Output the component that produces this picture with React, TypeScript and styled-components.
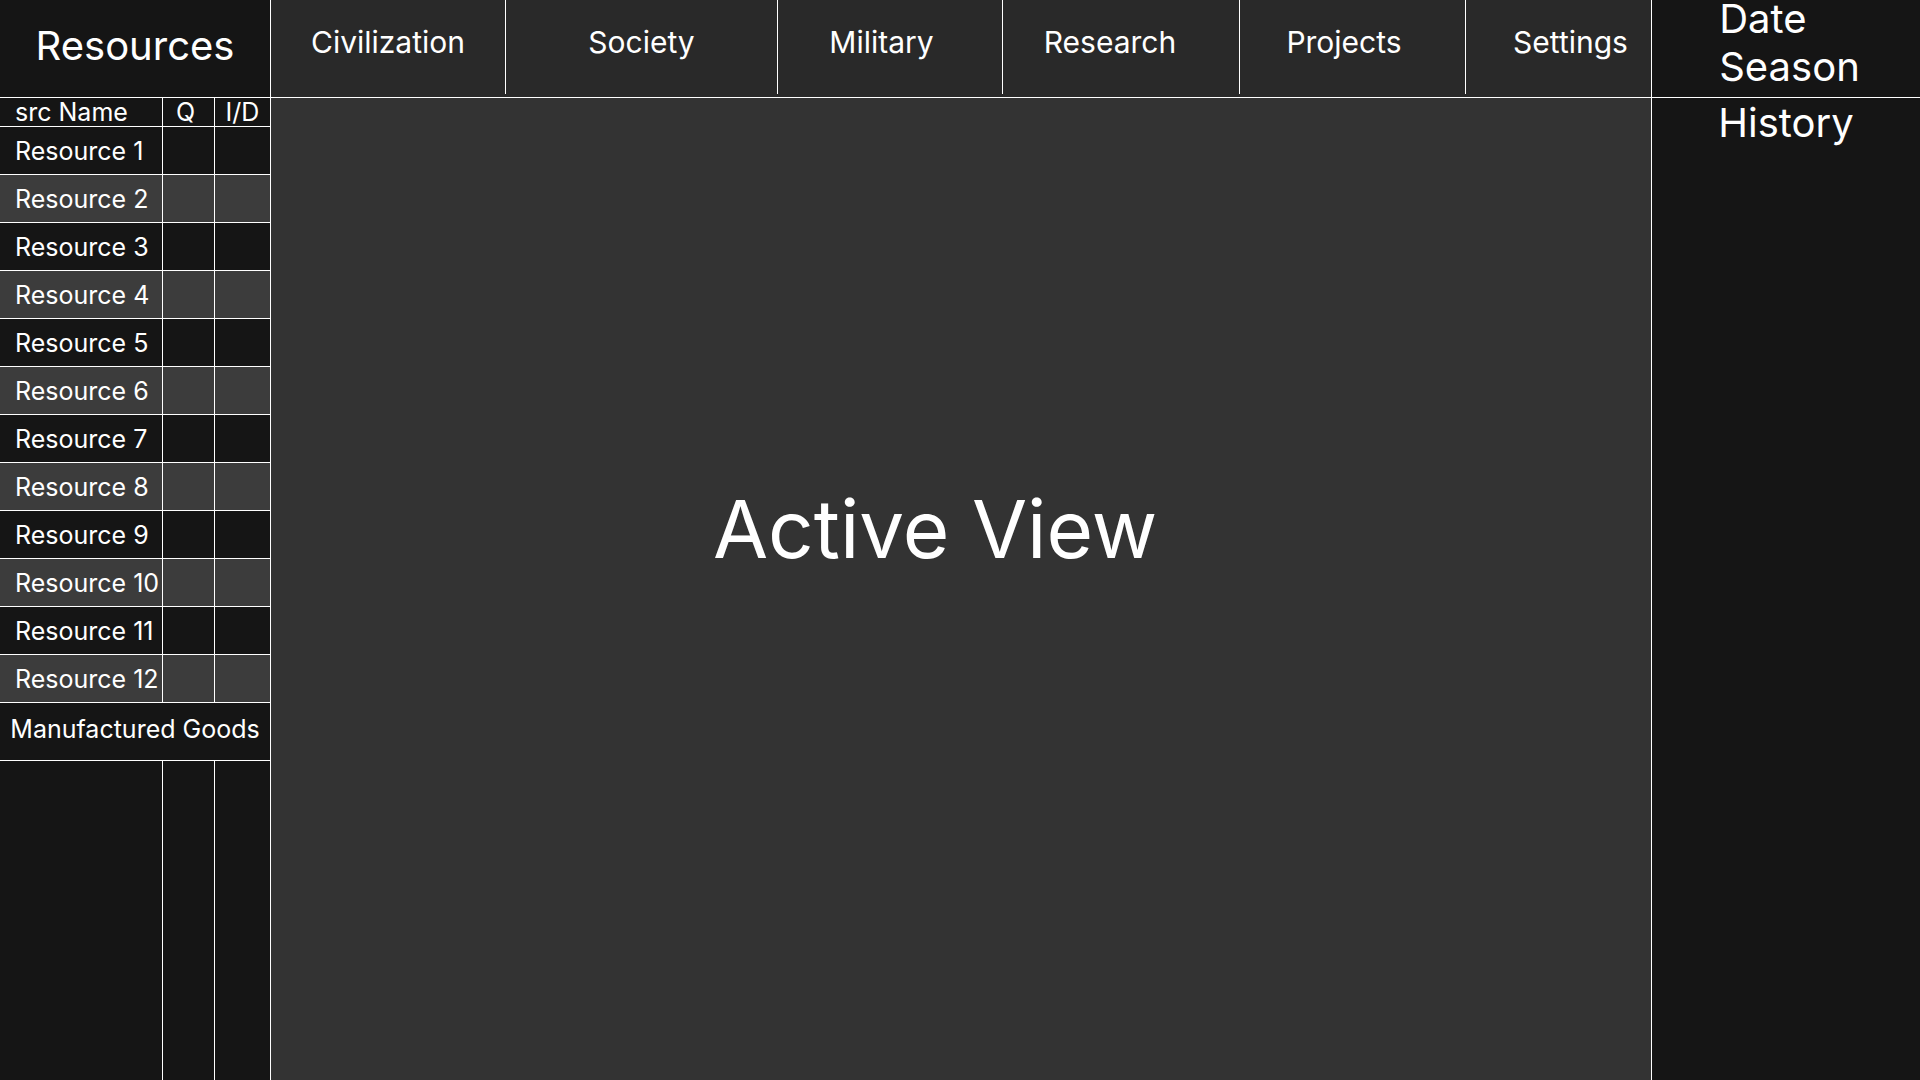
import React from "react";
import styled, { createGlobalStyle } from "styled-components";

const GlobalStyle = createGlobalStyle`
  html, body {
    margin: 0;
    padding: 0;
    background: #151515;
    overflow: hidden;
  }
  * { box-sizing: border-box; }
  body {
    font-family: Inter, "Noto Sans", sans-serif;
    color: #ffffff;
  }
`;

const Screen = styled.div`
  width: 1920px;
  height: 1080px;
  display: grid;
  grid-template-columns: 270px 1380px 268px;
  grid-template-rows: 97px 982px;
  gap: 1px;
  background: #ffffff;
  overflow: hidden;
`;

const Title = styled.div`
  background: #151515;
  display: flex;
  justify-content: center;
  align-items: flex-start;
  padding-top: 21px;
  font-size: 40px;
`;

const Nav = styled.nav`
  background: #292929;
  display: flex;
  align-items: flex-start;
`;

const Tab = styled.div<{ $w: number; $shift: number; $first?: boolean }>`
  width: ${(p) => p.$w}px;
  height: 94px;
  flex: none;
  border-left: ${(p) => (p.$first ? "none" : "1px solid #ffffff")};
  display: flex;
  justify-content: center;
  align-items: flex-start;
  padding-top: 24px;
  padding-left: ${(p) => Math.max(0, p.$shift * 2)}px;
  padding-right: ${(p) => Math.max(0, -p.$shift * 2)}px;
  font-size: 30px;
  white-space: nowrap;
`;

const Clock = styled.div`
  background: #151515;
  display: flex;
  justify-content: center;
  align-items: flex-start;
  padding-left: 7px;
`;

const ClockLines = styled.div`
  margin-top: -5px;
  font-size: 40px;
  line-height: 48px;
  text-align: left;
`;

const LeftPanel = styled.div`
  display: grid;
  grid-template-columns: 162px 51px 55px;
  grid-template-rows: 28px repeat(12, 47px) 57px 1fr;
  gap: 1px;
  background-color: #ffffff;
`;

const HeadCell = styled.div<{ $align?: "left" | "center"; $nudge?: number }>`
  background: #151515;
  display: flex;
  align-items: center;
  justify-content: ${(p) => (p.$align === "left" ? "flex-start" : "center")};
  padding-left: ${(p) => (p.$align === "left" ? "15px" : "0")};
  padding-right: ${(p) => (p.$nudge ? p.$nudge * 2 : 0)}px;
  font-size: 25px;
  white-space: nowrap;
`;

const Cell = styled.div<{ $alt: boolean; $name?: boolean }>`
  background: ${(p) => (p.$alt ? "#3c3c3c" : "#151515")};
  display: flex;
  align-items: center;
  padding-left: ${(p) => (p.$name ? "15px" : "0")};
  font-size: 25px;
  white-space: nowrap;
  overflow: visible;
`;

const GroupRow = styled.div`
  grid-column: 1 / -1;
  background: #151515;
  display: flex;
  align-items: center;
  justify-content: center;
  padding-bottom: 5px;
  font-size: 25px;
  white-space: nowrap;
`;

const EmptyCell = styled.div`
  background: #151515;
`;

const Main = styled.main`
  background: #333333;
  display: flex;
  align-items: center;
  justify-content: center;
  padding-right: 52px;
  padding-bottom: 122px;
`;

const ViewLabel = styled.div`
  font-size: 80px;
  white-space: nowrap;
`;

const History = styled.aside`
  background: #151515;
  display: flex;
  justify-content: center;
  align-items: flex-start;
  font-size: 40px;
`;

const tabs: { label: string; w: number; shift: number }[] = [
  { label: "Civilization", w: 234, shift: 0 },
  { label: "Society", w: 272, shift: 0 },
  { label: "Military", w: 225, shift: -8.5 },
  { label: "Research", w: 237, shift: -11 },
  { label: "Projects", w: 226, shift: -8.5 },
  { label: "Settings", w: 186, shift: 12 },
];

const resources = Array.from({ length: 12 }, (_, i) => `Resource ${i + 1}`);

export default function App() {
  return (
    <>
      <GlobalStyle />
      <Screen>
        <Title>Resources</Title>
        <Nav>
          {tabs.map((t, i) => (
            <Tab key={t.label} $w={t.w} $shift={t.shift} $first={i === 0}>
              {t.label}
            </Tab>
          ))}
        </Nav>
        <Clock>
          <ClockLines>
            <div>Date</div>
            <div>Season</div>
          </ClockLines>
        </Clock>

        <LeftPanel>
          <HeadCell $align="left">src Name</HeadCell>
          <HeadCell $nudge={3}>Q</HeadCell>
          <HeadCell>I/D</HeadCell>
          {resources.map((r, i) => (
            <React.Fragment key={r}>
              <Cell $alt={i % 2 === 1} $name>
                {r}
              </Cell>
              <Cell $alt={i % 2 === 1} />
              <Cell $alt={i % 2 === 1} />
            </React.Fragment>
          ))}
          <GroupRow>Manufactured Goods</GroupRow>
          <EmptyCell />
          <EmptyCell />
          <EmptyCell />
        </LeftPanel>

        <Main>
          <ViewLabel>Active View</ViewLabel>
        </Main>

        <History>History</History>
      </Screen>
    </>
  );
}
